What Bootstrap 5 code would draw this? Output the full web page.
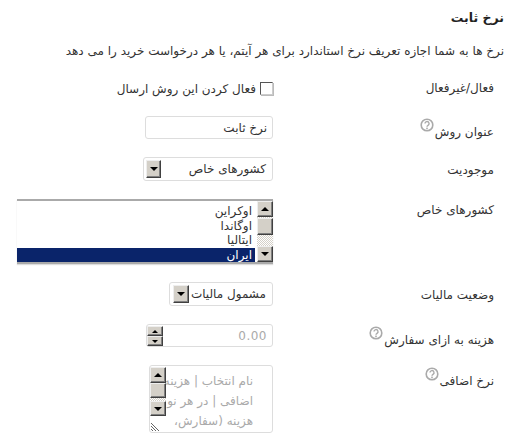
<!DOCTYPE html>
<html lang="fa" dir="rtl">
<head>
<meta charset="utf-8">
<title>نرخ ثابت</title>
<link rel="stylesheet" href="https://cdn.jsdelivr.net/npm/bootstrap@5.3.0/dist/css/bootstrap.min.css">
<style>
html,body{background:#fff;overflow:hidden}
body{font-family:"DejaVu Sans",sans-serif;font-size:12px;color:#333;line-height:16px;height:445px}
.shell{padding:8px 25px 0 0}
.ttl{font-size:12.5px;font-weight:700;line-height:20px;margin:0 0 15px;color:#222}
.intro{margin:0 0 16px;height:16px;white-space:nowrap}
.rows{display:flex;flex-direction:column;gap:18px}
.frow{display:flex;align-items:flex-start}
.lbl{width:231px;height:23px;flex:none;margin:0;padding:5px 10px 0 0;color:#333;font-weight:400}
.lbl.low{padding-top:2px}
.lbl.mid{padding-top:3px}
.hint{display:inline-block;vertical-align:4px;margin-right:1px;width:14px;height:14px}
.field{flex:none;position:relative;background:#fff;border:1px solid #ddd;border-radius:3px;color:#333;font:inherit}
.t-input{width:128px;height:23px;padding:0 5px;outline:0}
.chk{display:flex;align-items:center;gap:4px;height:23px;padding-top:4px;margin:0}
.chkbox{appearance:none;width:13px;height:13px;margin:0;background:#fff;border:1px solid;border-color:#555 #ccc #ccc #555;box-shadow:1px 1px 0 #bbb;flex:none}
.drop{height:24px;line-height:22px;padding:0 6px;outline:0}
.drop-a{width:130px}
.drop-b{width:104px}
.wb{position:absolute;box-sizing:border-box;background:#d4d0c8;border:1px solid;border-color:#eee #404040 #404040 #eee;box-shadow:inset -1px -1px 0 #808080;display:flex;align-items:center;justify-content:center}
.wb::after{content:"";border-left:4px solid transparent;border-right:4px solid transparent}
.up::after{border-bottom:4px solid #000}
.dn::after{border-top:4px solid #000}
.plain::after{display:none}
.b-drop-a{left:2px;top:2px;width:15px;height:18px}
.b-drop-b{left:3px;top:2px;width:16px;height:18px}
.lst{position:relative;width:256px;height:65px;border-top:2px solid #aaa;border-bottom:2px solid #aaa;padding:3px 18px 0 0;overflow:hidden;color:#333;line-height:14.5px;box-shadow:0 1px 1px #ddd}
.lst div{height:14.5px;padding-right:3px}
.lst .on{background:#0a246a;color:#fff}
.trk{position:absolute;width:16px;background:#d4d0c8;background-image:linear-gradient(45deg,#fff 25%,transparent 25%,transparent 75%,#fff 75%),linear-gradient(45deg,#fff 25%,transparent 25%,transparent 75%,#fff 75%);background-size:2px 2px;background-position:0 0,1px 1px}
.lst .trk{right:0;top:0;bottom:0}
.s1{left:0;top:0;width:16px;height:16px}
.s2{left:0;top:17px;width:16px;height:17px}
.s3{left:0;bottom:0;width:16px;height:16px}
.num{width:127px;height:23px;padding:0 5px;color:#aaa;text-align:right;letter-spacing:.5px;line-height:22px;direction:ltr}
.sp1{left:0;top:1px;width:16px;height:10px}
.sp2{left:0;top:11px;width:16px;height:10px}
.sp1::after,.sp2::after{border-left-width:3px;border-right-width:3px}
.sp1::after{border-bottom-width:3px}
.sp2::after{border-top-width:3px}
.area{width:124px;height:68px;padding:5px 19px 0 0;overflow:hidden;color:#aaa;line-height:20px;white-space:nowrap}
.area .trk{left:0;top:1px;height:49px}
.a1{left:0;top:0;width:16px;height:16px}
.a2{left:0;top:16px;width:16px;height:15px}
.a3{left:0;top:34px;width:16px;height:15px}
.grip{position:absolute;left:1px;bottom:1px;width:9px;height:9px;display:block}
</style>
</head>
<body>
<div class="shell">
  <h1 class="ttl">نرخ ثابت</h1>
  <p class="intro">نرخ ها به شما اجازه تعریف نرخ استاندارد برای هر آیتم، یا هر درخواست خرید را می دهد</p>
  <form class="rows">
    <div class="frow">
      <label class="lbl" for="f1">فعال/غیرفعال</label>
      <label class="chk"><input id="f1" class="chkbox" type="checkbox"><span>فعال کردن این روش ارسال</span></label>
    </div>
    <div class="frow">
      <label class="lbl low" for="f2">عنوان روش<svg class="hint" viewBox="0 0 14 14"><circle cx="7" cy="7" r="5.8" fill="#fff" stroke="#aaa" stroke-width="1.6"/><path d="M5 5.6a2 2 0 1 1 3 1.7c-.7.4-1 .7-1 1.4" fill="none" stroke="#aaa" stroke-width="1.4"/><rect x="6.2" y="9.6" width="1.6" height="1.6" fill="#aaa"/></svg></label>
      <input id="f2" class="field t-input" type="text" value="نرخ ثابت">
    </div>
    <div class="frow">
      <label class="lbl" for="f3">موجودیت</label>
      <div class="field drop drop-a" id="f3">کشورهای خاص<span class="wb dn b-drop-a"></span></div>
    </div>
    <div class="frow">
      <label class="lbl mid">کشورهای خاص</label>
      <div class="lst">
        <div>اوکراین</div><div>اوگاندا</div><div>ایتالیا</div><div class="on">ایران</div>
        <span class="trk"><span class="wb up s1"></span><span class="wb plain s2"></span><span class="wb dn s3"></span></span>
      </div>
    </div>
    <div class="frow">
      <label class="lbl">وضعیت مالیات</label>
      <div class="field drop drop-b">مشمول مالیات<span class="wb dn b-drop-b"></span></div>
    </div>
    <div class="frow">
      <label class="lbl low">هزینه به ازای سفارش<svg class="hint" viewBox="0 0 14 14"><circle cx="7" cy="7" r="5.8" fill="#fff" stroke="#aaa" stroke-width="1.6"/><path d="M5 5.6a2 2 0 1 1 3 1.7c-.7.4-1 .7-1 1.4" fill="none" stroke="#aaa" stroke-width="1.4"/><rect x="6.2" y="9.6" width="1.6" height="1.6" fill="#aaa"/></svg></label>
      <div class="field num">0.00<span class="wb up sp1"></span><span class="wb dn sp2"></span></div>
    </div>
    <div class="frow">
      <label class="lbl low">نرخ اضافی<svg class="hint" viewBox="0 0 14 14"><circle cx="7" cy="7" r="5.8" fill="#fff" stroke="#aaa" stroke-width="1.6"/><path d="M5 5.6a2 2 0 1 1 3 1.7c-.7.4-1 .7-1 1.4" fill="none" stroke="#aaa" stroke-width="1.4"/><rect x="6.2" y="9.6" width="1.6" height="1.6" fill="#aaa"/></svg></label>
      <div class="field area">نام انتخاب | هزینه<br>اضافی | در هر نو<br>هزینه (سفارش،
        <span class="trk"><span class="wb up a1"></span><span class="wb plain a2"></span><span class="wb dn a3"></span></span>
        <svg class="grip" viewBox="0 0 9 9"><path d="M0 1l8 8M0 4l5 5M0 7l2 2" stroke="#666" fill="none"/></svg>
      </div>
    </div>
  </form>
</div>
<script src="https://cdn.jsdelivr.net/npm/bootstrap@5.3.0/dist/js/bootstrap.bundle.min.js"></script>
</body>
</html>
